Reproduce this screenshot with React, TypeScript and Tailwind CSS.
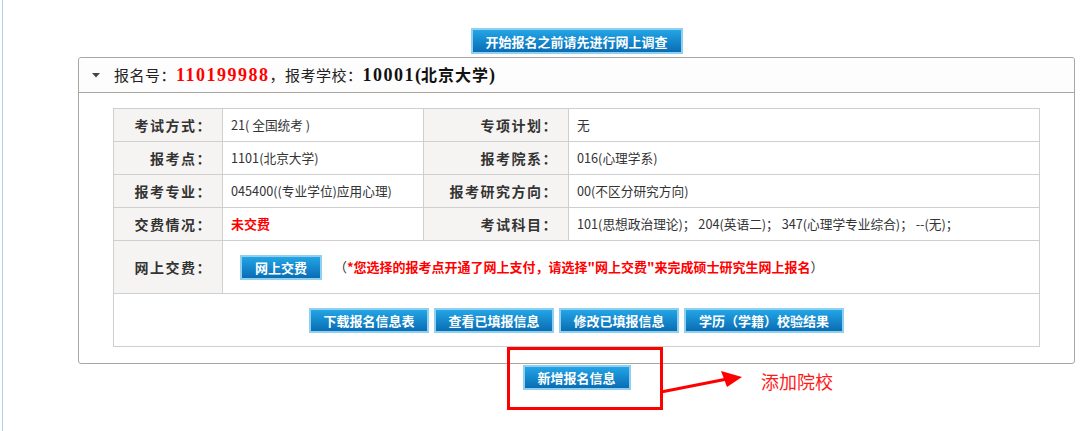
import React from "react";

const cjk = { fontFamily: '"Noto Sans CJK SC", "Liberation Sans", sans-serif' };
const serif = { fontFamily: '"Liberation Serif", "Noto Sans CJK SC", serif' };

function BlueBtn({ children, w, h = "h-[25px]" }: { children: React.ReactNode; w: string; h?: string }) {
  return (
    <div className={`${w} ${h} border-2 border-[#8fd0ef] bg-linear-to-b from-[#23a5e6] to-[#0a6db4] flex items-center justify-center text-white font-bold text-[13px] leading-none`}>
      {children}
    </div>
  );
}

function Label({ children }: { children: React.ReactNode }) {
  return (
    <td className="bg-[#f5f4f2] border border-[#cfcfcf] text-right pr-[10px] text-[14px] tracking-[1.5px] font-bold text-[#333]">
      {children}
    </td>
  );
}

function Val({ children }: { children: React.ReactNode }) {
  return <td className="border border-[#cfcfcf] pl-[8px] text-[12.7px] text-[#333]">{children}</td>;
}

export default function App() {
  return (
    <div className="relative h-[431px] w-[1091px] bg-white overflow-hidden" style={cjk}>
      <div className="ml-[2px] h-full border-l border-[#a9d7f3] pl-[75px] pt-[28px]">
        <div className="w-[997px] flex flex-col items-center">
          <BlueBtn w="w-[212px]" h="h-[26px]">开始报名之前请先进行网上调查</BlueBtn>
          <div className="mt-[3px] w-[997px] border border-[#a8a69f] rounded-[3px]">
            <div className="h-[35px] bg-[#fdfdfd] border-b border-[#a8a69f] flex items-center pl-[13px] text-[15px] text-[#222] rounded-t-[3px]">
              <svg width="8" height="5" viewBox="0 0 8 5" className="mr-[14px] mt-[1px]">
                <polygon points="0,0 8,0 4,4.5" fill="#444" />
              </svg>
              <span className="tracking-[0.5px]">报名号：</span>
              <span className="text-[#ff0000] font-bold text-[18px] tracking-[1.5px]" style={serif}>110199988</span>
              <span className="tracking-[0.5px]">，报考学校：</span>
              <span className="font-bold text-[18px] text-[#111]" style={serif}>
                <span className="tracking-[1.5px]">10001</span>(<span className="text-[16px] tracking-[1px]" style={cjk}>北京大学</span>)
              </span>
            </div>
            <div className="pt-[15px] pb-[16px] px-[34px]">
              <table className="w-[926px] border-collapse table-fixed">
                <colgroup>
                  <col className="w-[109px]" />
                  <col className="w-[201px]" />
                  <col className="w-[145px]" />
                  <col className="w-[471px]" />
                </colgroup>
                <tbody>
                  <tr className="h-[33px]">
                    <Label>考试方式：</Label>
                    <Val>21( 全国统考 )</Val>
                    <Label>专项计划：</Label>
                    <Val>无</Val>
                  </tr>
                  <tr className="h-[33px]">
                    <Label>报考点：</Label>
                    <Val>1101(北京大学)</Val>
                    <Label>报考院系：</Label>
                    <Val>016(心理学系)</Val>
                  </tr>
                  <tr className="h-[33px]">
                    <Label>报考专业：</Label>
                    <Val>045400((专业学位)应用心理)</Val>
                    <Label>报考研究方向：</Label>
                    <Val>00(不区分研究方向)</Val>
                  </tr>
                  <tr className="h-[33px]">
                    <Label>交费情况：</Label>
                    <td className="border border-[#cfcfcf] pl-[8px] text-[13px] font-bold text-[#ff0000]">未交费</td>
                    <Label>考试科目：</Label>
                    <Val>101(思想政治理论)； 204(英语二)； 347(心理学专业综合)； --(无)；</Val>
                  </tr>
                  <tr className="h-[53px]">
                    <Label>网上交费：</Label>
                    <td colSpan={3} className="border border-[#cfcfcf] pl-[17px]">
                      <div className="flex items-center">
                        <BlueBtn w="w-[82px]">网上交费</BlueBtn>
                        <span className="ml-[12px] text-[13px] text-[#333]">（</span>
                        <span className="text-[13px] font-bold text-[#ff0000]">*您选择的报考点开通了网上支付，请选择"网上交费"来完成硕士研究生网上报名</span>
                        <span className="text-[13px] text-[#333]">）</span>
                      </div>
                    </td>
                  </tr>
                  <tr className="h-[53px]">
                    <td colSpan={4} className="border border-[#cfcfcf]">
                      <div className="flex justify-center gap-[5px]">
                        <BlueBtn w="w-[120px]">下载报名信息表</BlueBtn>
                        <BlueBtn w="w-[120px]">查看已填报信息</BlueBtn>
                        <BlueBtn w="w-[120px]">修改已填报信息</BlueBtn>
                        <BlueBtn w="w-[160px]">学历（学籍）校验结果</BlueBtn>
                      </div>
                    </td>
                  </tr>
                </tbody>
              </table>
            </div>
          </div>
          <div className="mt-[1px]">
            <BlueBtn w="w-[108px]">新增报名信息</BlueBtn>
          </div>
        </div>
      </div>

      <div className="absolute left-[507px] top-[347px] w-[156px] h-[63px] border-[3px] border-[#ff0000]" />
      <svg className="absolute left-[655px] top-[365px]" width="95" height="35" viewBox="0 0 95 35">
        <line x1="6" y1="27" x2="72" y2="14" stroke="#ff0000" strokeWidth="3" />
        <polygon points="87,12 66,6 72,22" fill="#ff0000" />
      </svg>
      <div className="absolute left-[761px] top-[369px] text-[18px] leading-[24px] text-[#ff1a1a]">添加院校</div>
    </div>
  );
}
